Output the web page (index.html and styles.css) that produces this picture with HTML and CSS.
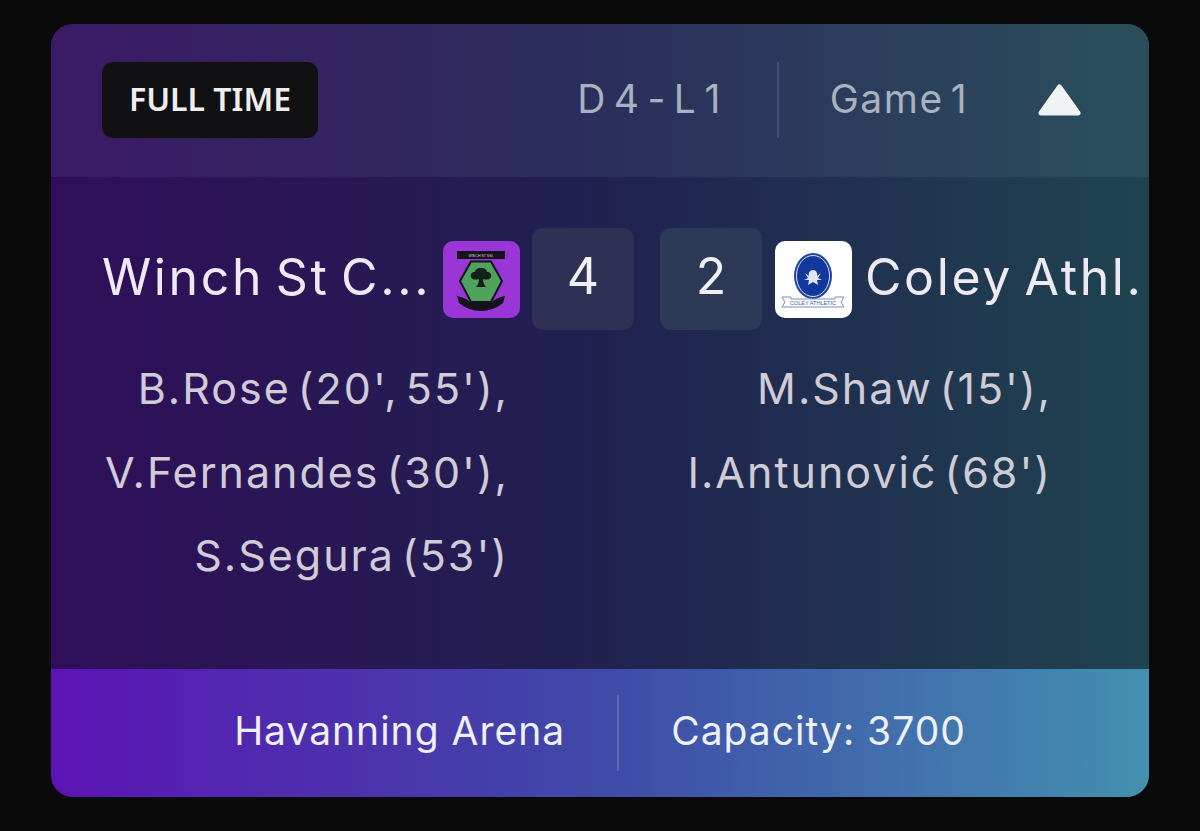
FILE: index.html
```html
<!DOCTYPE html>
<html lang="en">
<head>
<meta charset="utf-8">
<title>Match</title>
<link rel="stylesheet" href="styles.css">
</head>
<body>
<main class="card">
  <header class="head">
    <div class="status">FULL TIME</div>
    <div class="head-right">
      <span class="record">D 4 - L 1</span>
      <span class="head-div"></span>
      <span class="game">Game 1</span>
      <svg class="caret" width="43" height="32" viewBox="0 0 43 32"><path d="M21.500 3 L40 29 H3 Z" fill="#f1f2f4" stroke="#f1f2f4" stroke-width="5" stroke-linejoin="round"/></svg>
    </div>
  </header>
  <section class="body">
    <div class="teams">
      <div class="team-name home">Winch St C...</div>
      <svg class="crest" viewBox="0 0 77 77">
        <rect width="77" height="77" rx="10" fill="#9a36d8"/>
        <rect x="14" y="10" width="48" height="8" fill="#15131c"/>
        <text class="crest-mini" x="38" y="16" text-anchor="middle">WINCH ST SSL</text>
        <path d="M28 20.500 H48 L59 40 L48 61 H28 L17 40Z" fill="#4fa35c" stroke="#15131c" stroke-width="2"/>
        <path d="M38 27c-4 0-6 2-6 4-3 0-5 2-4 5 1 3 5 3 8 2 0 3-1 6-3 8h10c-2-2-3-5-3-8 3 1 7 1 8-2 1-3-1-5-4-5 0-2-2-4-6-4z" fill="#14201a"/>
        <path d="M14 55 Q24 57 28 62 H48 Q52 57 62 55 L60 62 Q50 70 38 70 Q26 70 16 62Z" fill="#14121a"/>
      </svg>
      <div class="score">4</div>
      <div class="score score-away">2</div>
      <svg class="crest crest-away" viewBox="0 0 77 77">
        <rect width="77" height="77" rx="10" fill="#fff"/>
        <ellipse cx="38" cy="35" rx="19" ry="23" fill="#1f45a6"/>
        <ellipse cx="38" cy="35" rx="16.500" ry="20.500" fill="#13389c" stroke="#d6deef" stroke-width="1"/>
        <path d="M38 29c3 0 5 3 4 6l4-3-3 5 4 2-5 0 1 5-5-3-5 3 1-5-5 0 4-2-3-5 4 3c-1-3 1-6 4-6z" fill="#dfe6f2"/>
        <path d="M7 56 H16 V58 H60 V56 H69 L66 61 L69 66 H7 L10 61Z" fill="#fff" stroke="#7b8fb8" stroke-width="1"/>
        <text class="crest-label" x="38" y="64" text-anchor="middle">COLEY ATHLETIC</text>
      </svg>
      <div class="team-name away">Coley Athl...</div>
    </div>
    <div class="scorers">
      <ul class="col col-home">
        <li>B.Rose (20', 55'),</li>
        <li>V.Fernandes (30'),</li>
        <li>S.Segura (53')</li>
      </ul>
      <ul class="col col-away">
        <li>M.Shaw (15'),</li>
        <li>I.Antunović (68')</li>
      </ul>
    </div>
  </section>
  <footer class="foot">
    <span class="venue">Havanning Arena</span>
    <span class="foot-div"></span>
    <span class="capacity">Capacity: 3700</span>
  </footer>
</main>
</body>
</html>
```
FILE: styles.css
```css
* { box-sizing: border-box; }
html, body { margin: 0; height: 100%; }
body {
  background: #0a0a0a;
  padding: 24px 51px 34px;
  font-family: "Inter", "Open Sans", sans-serif;
  overflow: hidden;
}
.card {
  width: 1098px;
  height: 773px;
  border-radius: 22px;
  overflow: hidden;
  display: flex;
  flex-direction: column;
  background: linear-gradient(90deg, #300e5a 0%, #212150 50%, #1f4450 100%);
}
.head {
  height: 153px;
  flex: none;
  padding: 38px 68px 39px 51px;
  display: flex;
  align-items: center;
  justify-content: space-between;
  background: linear-gradient(90deg, #3b1a66 0%, #2c2e5c 50%, #2a4f5b 100%);
}
.status {
  width: 216px;
  height: 76px;
  border-radius: 11px;
  background: #111113;
  color: #eeeeee;
  font-family: "Noto Sans", sans-serif;
  font-size: 32px;
  font-weight: 600;
  padding-bottom: 4px;
  display: flex;
  align-items: center;
  justify-content: center;
}
.head-right { display: flex; align-items: center; }
.record, .game {
  color: #a9b2c0;
  font-size: 39px;
  letter-spacing: 1.500px;
  word-spacing: -5.500px;
  padding-bottom: 4px;
}
.head-div { width: 2px; height: 76px; background: rgba(255,255,255,0.12); margin: 0 51px 0 55px; }
.caret { margin-left: 70px; }
.body { flex: 1; padding-top: 51px; }
.teams { display: flex; align-items: center; height: 102px; }
.team-name {
  color: #efe9f3;
  font-size: 50px;
  letter-spacing: 2.600px;
  word-spacing: -5px;
  white-space: nowrap;
  padding-bottom: 5px;
}
.home { margin-left: 51px; width: 341px; }
.away { margin-left: 13px; overflow: hidden; width: 280px; }
.crest { width: 77px; height: 77px; flex: none; }
.crest-away { margin-left: 13px; }
.crest-label { font-size: 5.500px; fill: #3c5a9c; font-family: "Liberation Sans", sans-serif; }
.crest-mini { font-size: 3.500px; fill: #dcdce0; font-family: "Liberation Sans", sans-serif; }
.score {
  width: 102px;
  height: 102px;
  margin-left: 12px;
  padding-bottom: 6px;
  border-radius: 11px;
  background: #2f3154;
  color: #f0f0f4;
  font-size: 50px;
  display: flex;
  align-items: center;
  justify-content: center;
}
.score-away { margin-left: 26px; background: #2c3a58; }
.scorers { display: flex; margin-top: 17px; }
.col {
  list-style: none;
  margin: 0;
  padding: 0;
  text-align: right;
  color: #cfccd8;
  font-size: 43px;
  letter-spacing: 2px;
  word-spacing: -7px;
  line-height: 83.500px;
}
.col-home { width: 458px; }
.col-away { width: 543px; }
.foot {
  height: 128px;
  flex: none;
  display: flex;
  align-items: center;
  justify-content: center;
  color: #eef0fa;
  font-size: 39px;
  letter-spacing: 1px;
  background: linear-gradient(90deg, #5c14b4 0%, #3f4aa8 50%, #4490b0 100%);
}
.venue, .capacity { padding-bottom: 6px; }
.foot-div { width: 2px; height: 76px; background: rgba(255,255,255,0.15); margin: 0 52px; }
```
